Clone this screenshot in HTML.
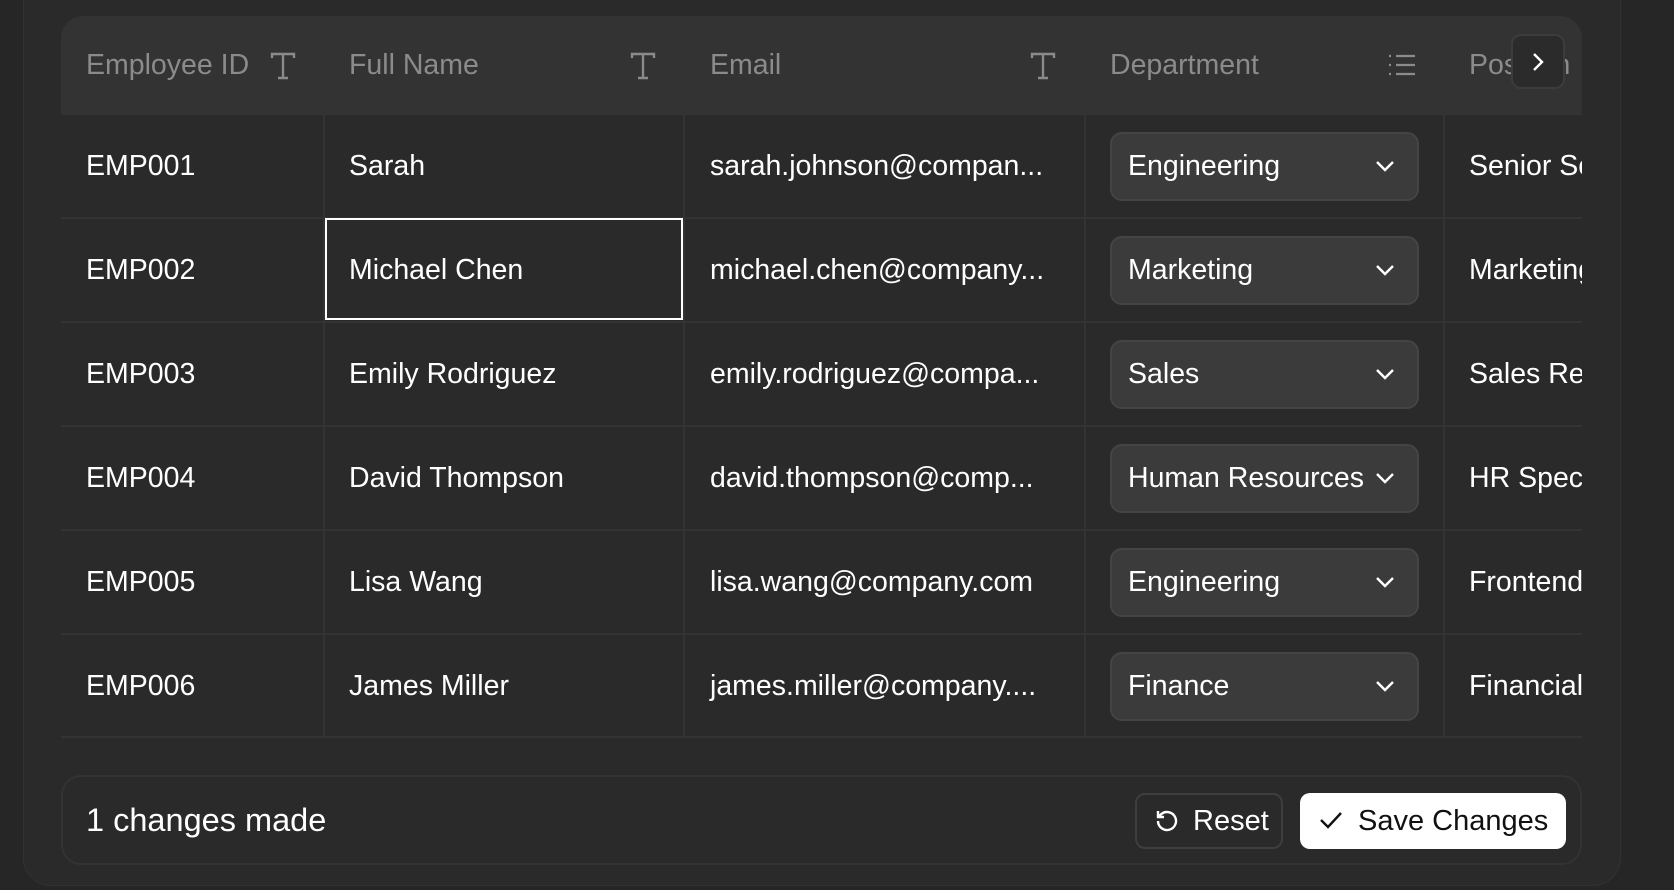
<!DOCTYPE html>
<html><head><meta charset="utf-8"><style>
*{box-sizing:border-box;margin:0;padding:0}
body{width:1674px;height:890px;background:#262626;font-family:"Liberation Sans",sans-serif;overflow:hidden;position:relative;color:#fff}
.panel{position:absolute;left:23px;top:-30px;width:1598px;height:916px;background:#2a2a2a;border:1px solid #323232;border-radius:28px}
.tbl{position:absolute;left:61px;top:16px;width:1521px;height:722px;border-radius:22px 22px 0 0;overflow:hidden;background:#2a2a2a;border-bottom:2px solid #333}
.hdr{position:absolute;left:0;top:0;width:100%;height:97px;background:#333}
.h{position:absolute;top:1px;height:97px;line-height:97px;font-size:28.5px;color:#8b8b8b}
.row{position:absolute;left:0;width:100%;height:104px;border-top:2px solid #333}
.c{position:absolute;top:0;height:102px;line-height:102px;font-size:28.5px;color:#fff;white-space:nowrap}
.vl{position:absolute;top:97px;width:2px;height:625px;background:#333}
.sel{position:absolute;left:1049px;top:17px;width:309px;height:69px;background:#3b3b3b;border:2px solid #444;border-radius:12px;font-size:28.5px;line-height:64px;padding-left:16px;white-space:nowrap}
.sel svg{position:absolute;right:22px;top:26px}
.foot{position:absolute;left:61px;top:775px;width:1521px;height:90px;border:2px solid #333;border-radius:20px}
</style></head><body>
<div class="panel"></div>
<div class="tbl">
<div class="hdr"></div>
<div class="h" style="left:25px">Employee ID</div>
<div class="h" style="left:288px">Full Name</div>
<div class="h" style="left:649px">Email</div>
<div class="h" style="left:1049px">Department</div>
<div class="h" style="left:1408px">Position</div>
<svg style="position:absolute;left:209px;top:36px" width="26" height="28" viewBox="0 0 26 28" fill="none" stroke="#8b8b8b" stroke-width="2.4"><path d="M2 6V2h22v4M13 2v24M8 26h10"/></svg>
<svg style="position:absolute;left:569px;top:36px" width="26" height="28" viewBox="0 0 26 28" fill="none" stroke="#8b8b8b" stroke-width="2.4"><path d="M2 6V2h22v4M13 2v24M8 26h10"/></svg>
<svg style="position:absolute;left:969px;top:36px" width="26" height="28" viewBox="0 0 26 28" fill="none" stroke="#8b8b8b" stroke-width="2.4"><path d="M2 6V2h22v4M13 2v24M8 26h10"/></svg>
<svg style="position:absolute;left:1327px;top:38px" width="28" height="22" viewBox="0 0 28 22" fill="none" stroke="#8b8b8b" stroke-width="2.2"><path d="M8 2h19M8 11h19M8 20h19M1 2h2M1 11h2M1 20h2"/></svg>
<div style="position:absolute;left:1450px;top:18px;width:54px;height:55px;background:#2b2b2b;border:2px solid #3c3c3c;border-radius:10px"><svg style="position:absolute;left:17px;top:15px" width="16" height="22" viewBox="0 0 16 22" fill="none" stroke="#fff" stroke-width="2.4"><path d="M4 3l8 8-8 8"/></svg></div>

<div class="vl" style="left:262px"></div><div class="vl" style="left:622px"></div><div class="vl" style="left:1023px"></div><div class="vl" style="left:1382px"></div>

<div class="row" style="top:97px"><div class="c" style="left:25px">EMP001</div><div class="c" style="left:288px">Sarah</div><div class="c" style="left:649px">sarah.johnson@compan...</div><div class="sel">Engineering<svg width="20" height="12" viewBox="0 0 20 12" fill="none" stroke="#fff" stroke-width="2.4"><path d="M2 2l8 8 8-8"/></svg></div><div class="c" style="left:1408px">Senior Software Engineer</div></div>
<div class="row" style="top:201px"><div class="c" style="left:25px">EMP002</div><div class="c" style="left:288px">Michael Chen</div><div class="c" style="left:649px">michael.chen@company...</div><div class="sel">Marketing<svg width="20" height="12" viewBox="0 0 20 12" fill="none" stroke="#fff" stroke-width="2.4"><path d="M2 2l8 8 8-8"/></svg></div><div class="c" style="left:1408px">Marketing Manager</div></div>
<div class="row" style="top:305px"><div class="c" style="left:25px">EMP003</div><div class="c" style="left:288px">Emily Rodriguez</div><div class="c" style="left:649px">emily.rodriguez@compa...</div><div class="sel">Sales<svg width="20" height="12" viewBox="0 0 20 12" fill="none" stroke="#fff" stroke-width="2.4"><path d="M2 2l8 8 8-8"/></svg></div><div class="c" style="left:1408px">Sales Representative</div></div>
<div class="row" style="top:409px"><div class="c" style="left:25px">EMP004</div><div class="c" style="left:288px">David Thompson</div><div class="c" style="left:649px">david.thompson@comp...</div><div class="sel">Human Resources<svg width="20" height="12" viewBox="0 0 20 12" fill="none" stroke="#fff" stroke-width="2.4"><path d="M2 2l8 8 8-8"/></svg></div><div class="c" style="left:1408px">HR Specialist</div></div>
<div class="row" style="top:513px"><div class="c" style="left:25px">EMP005</div><div class="c" style="left:288px">Lisa Wang</div><div class="c" style="left:649px">lisa.wang@company.com</div><div class="sel">Engineering<svg width="20" height="12" viewBox="0 0 20 12" fill="none" stroke="#fff" stroke-width="2.4"><path d="M2 2l8 8 8-8"/></svg></div><div class="c" style="left:1408px">Frontend Developer</div></div>
<div class="row" style="top:617px"><div class="c" style="left:25px">EMP006</div><div class="c" style="left:288px">James Miller</div><div class="c" style="left:649px">james.miller@company....</div><div class="sel">Finance<svg width="20" height="12" viewBox="0 0 20 12" fill="none" stroke="#fff" stroke-width="2.4"><path d="M2 2l8 8 8-8"/></svg></div><div class="c" style="left:1408px">Financial Analyst</div></div>
<div style="position:absolute;left:264px;top:202px;width:358px;height:102px;border:2px solid #fff"></div>
</div>
<div class="foot">
<div style="position:absolute;left:23px;top:0;line-height:86px;font-size:32.5px">1 changes made</div>
<div style="position:absolute;left:1072px;top:16px;width:148px;height:56px;border:2px solid #3e3e3e;border-radius:10px;font-size:29px;line-height:52px;padding-left:56px">Reset<svg style="position:absolute;left:17px;top:13px" width="26" height="26" viewBox="0 0 26 26" fill="none" stroke="#fff" stroke-width="2.4"><path d="M4 13a9 9 0 1 0 3-6.7L4 9M4 3v6h6"/></svg></div>
<div style="position:absolute;left:1237px;top:16px;width:266px;height:56px;background:#fff;border-radius:10px;color:#111;font-size:29px;line-height:56px;padding-left:58px">Save Changes<svg style="position:absolute;left:19px;top:17px" width="24" height="20" viewBox="0 0 24 20" fill="none" stroke="#111" stroke-width="2.4"><path d="M2 10l7 7L22 3"/></svg></div>
</div>
</body></html>
